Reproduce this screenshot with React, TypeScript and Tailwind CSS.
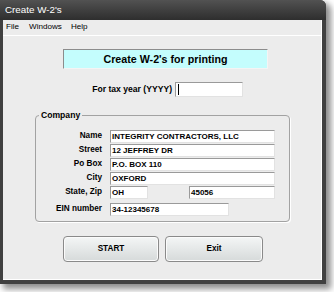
import React from "react";

function Field({ w, text }: { w: string; text?: string }) {
  return (
    <div
      className={
        "h-[13px] bg-white border border-t-[#9a9a9a] border-l-[#9a9a9a] border-b-[#e2e2e2] border-r-[#e2e2e2] flex items-center pl-[1px] text-[8px] font-bold leading-none text-black " +
        w
      }
    >
      {text}
    </div>
  );
}

function Row({ label, children, extra }: { label: string; children: React.ReactNode; extra?: string }) {
  return (
    <div className={"flex items-center h-[13px] " + (extra ?? "")}>
      <div className="w-[66px] text-right text-[8.2px] font-bold leading-none text-black">{label}</div>
      <div className="ml-[8px] flex items-center">{children}</div>
    </div>
  );
}

export default function App() {
  return (
    <div className="w-[334px] h-[292px] bg-white [font-family:'Liberation_Sans',Arial,sans-serif] overflow-hidden">
      <div className="w-[326px] h-[284px] bg-[#404040] rounded-tr-[6px] shadow-[4px_4px_6px_1px_rgba(0,0,0,0.45)] flex flex-col">
        {/* title bar */}
        <div className="h-[20px] rounded-tr-[6px] bg-gradient-to-b from-[#525252] to-[#2e2e2e] flex items-center pl-[5px] text-white text-[9.8px] leading-none">
          Create W-2's
        </div>
        {/* body */}
        <div className="ml-[3px] mr-[4px] h-[260px] bg-[#ececec] border-r border-b border-white flex flex-col">
          {/* menu */}
          <div className="h-[16px] flex items-center pl-[3px] text-[8.1px] leading-none text-black border-b border-white">
            <span>File</span>
            <span className="ml-[10px]">Windows</span>
            <span className="ml-[9px]">Help</span>
          </div>
          {/* heading box */}
          <div className="mt-[13px] ml-[60px] w-[205px] h-[20px] bg-[#c4fdfd] border border-t-[#8c8c8c] border-l-[#8c8c8c] border-b-[#f4f4f4] border-r-[#f4f4f4] flex items-center justify-center text-[10.7px] font-bold leading-none text-black">
            Create W-2's for printing
          </div>
          {/* tax year */}
          <div className="mt-[13px] flex items-center">
            <div className="w-[169px] text-right text-[8.6px] font-bold leading-none text-black">For tax year (YYYY)</div>
            <div className="ml-[3px] w-[68px] h-[15px] bg-white border border-t-[#9a9a9a] border-l-[#9a9a9a] border-b-[#e2e2e2] border-r-[#e2e2e2] flex items-center">
              <span className="ml-[2px] w-px h-[11px] bg-black" />
            </div>
          </div>
          {/* company group */}
          <fieldset className="mt-[13px] ml-[32px] w-[255px] border border-[#a2a2a2] rounded-[4px] pt-[10px] pb-[5px] shadow-[1px_1px_0_#ffffff]">
            <legend className="ml-[3px] px-[2px] text-[8.6px] font-bold leading-[10px] text-black">Company</legend>
            <div className="flex flex-col gap-[1px]">
              <Row label="Name">
                <Field w="w-[165px]" text="INTEGRITY CONTRACTORS, LLC" />
              </Row>
              <Row label="Street">
                <Field w="w-[165px]" text="12 JEFFREY DR" />
              </Row>
              <Row label="Po Box">
                <Field w="w-[165px]" text="P.O. BOX 110" />
              </Row>
              <Row label="City">
                <Field w="w-[165px]" text="OXFORD" />
              </Row>
              <Row label="State, Zip">
                <Field w="w-[38px]" text="OH" />
                <div className="ml-[41px]">
                  <Field w="w-[86px]" text="45056" />
                </div>
              </Row>
              <Row label="EIN number" extra="mt-[3px]">
                <Field w="w-[119px]" text="34-12345678" />
              </Row>
            </div>
          </fieldset>
          {/* buttons */}
          <div className="mt-[14px] ml-[60px] flex gap-[6px]">
            <button className="w-[96px] h-[26px] rounded-[4px] border border-[#8a8a8a] bg-gradient-to-b from-[#f4f6f6] to-[#d6dada] shadow-[inset_0_0_0_1px_#fbfbfb] text-[8.2px] font-bold leading-none text-black">
              START
            </button>
            <button className="w-[98px] h-[26px] rounded-[4px] border border-[#8a8a8a] bg-gradient-to-b from-[#f4f6f6] to-[#d6dada] shadow-[inset_0_0_0_1px_#fbfbfb] text-[8.2px] font-bold leading-none text-black">
              Exit
            </button>
          </div>
        </div>
      </div>
    </div>
  );
}
